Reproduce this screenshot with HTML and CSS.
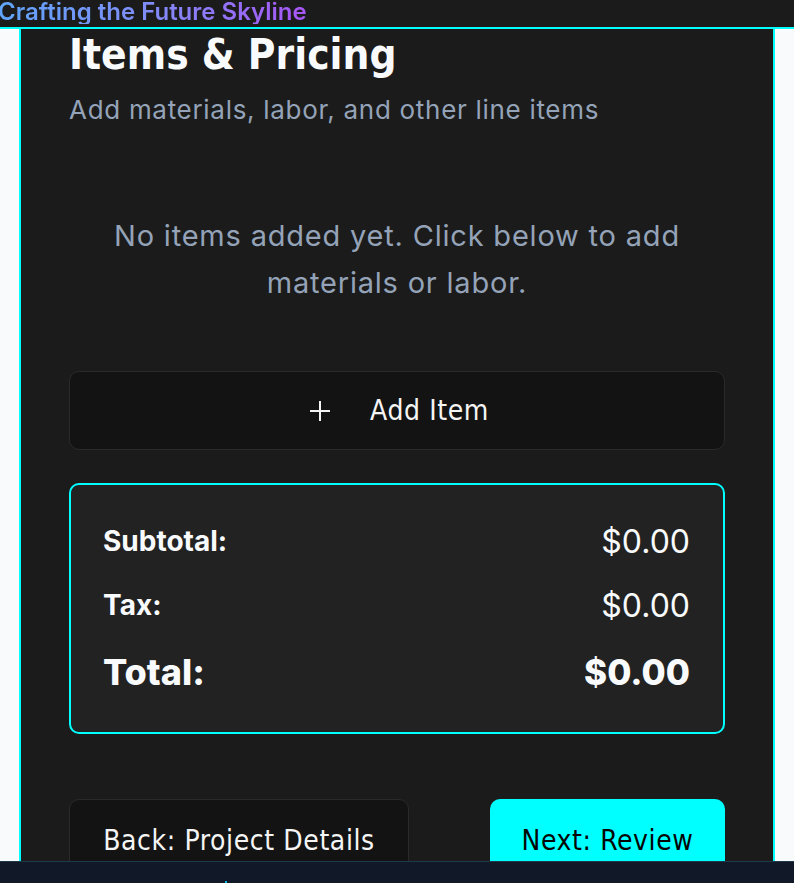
FILE: index.html
```html
<!DOCTYPE html>
<html lang="en">
<head>
<meta charset="utf-8">
<title>Items &amp; Pricing</title>
<link rel="stylesheet" href="styles.css">
</head>
<body>
<header class="topbar">
  <span class="brand">Crafting the Future Skyline</span>
</header>
<main class="card">
  <h1 class="title">Items &amp; Pricing</h1>
  <p class="subtitle">Add materials, labor, and other line items</p>
  <p class="empty">No items added yet. Click below to add materials or labor.</p>
  <button class="add-btn" type="button">
    <svg class="plus" width="22" height="22" viewBox="0 0 22 22" aria-hidden="true"><path d="M11 1v20M1 11h20" stroke="#f5f5f5" stroke-width="2" fill="none"/></svg>
    <span>Add Item</span>
  </button>
  <section class="summary">
    <div class="row"><span class="label">Subtotal:</span><span class="value">$0.00</span></div>
    <div class="row"><span class="label">Tax:</span><span class="value">$0.00</span></div>
    <div class="row total"><span class="label">Total:</span><span class="value">$0.00</span></div>
  </section>
  <div class="nav">
    <button class="nav-btn back" type="button">Back: Project Details</button>
    <button class="nav-btn next" type="button">Next: Review</button>
  </div>
</main>
<footer class="bottombar"><span class="dot"></span></footer>
</body>
</html>
```
FILE: styles.css
```css
html, body {
  margin: 0;
  padding: 0;
}
body {
  background: #f8fafc;
  font-family: Inter, "Noto Sans", sans-serif;
  height: 883px;
  overflow: hidden;
}
.topbar {
  background: #1b1b1b;
  height: 27px;
  border-bottom: 2px solid #00ffff;
  overflow: hidden;
}
.brand {
  display: inline-block;
  margin-left: -2px;
  font-size: 24px;
  line-height: 24px;
  font-weight: 600;
  background: linear-gradient(90deg, #60a5fa 0%, #818cf8 50%, #a855f7 100%);
  -webkit-background-clip: text;
  background-clip: text;
  color: transparent;
}
.card {
  margin: 0 19px;
  background: #1b1b1b;
  border-left: 2px solid #00ffff;
  border-right: 2px solid #00ffff;
  padding: 0 48px 40px;
  min-height: 900px;
}
.title {
  margin: 0;
  font-family: "DejaVu Sans", sans-serif;
  font-stretch: condensed;
  font-size: 42px;
  line-height: 52px;
  font-weight: 700;
  color: #f8fafc;
}
.subtitle {
  margin: 13px 0 0;
  font-size: 26px;
  line-height: 32px;
  letter-spacing: 0.7px;
  color: #94a3b8;
}
.empty {
  margin: 86px 0 0;
  font-size: 29px;
  line-height: 47px;
  letter-spacing: 0.8px;
  text-align: center;
  color: #94a3b8;
  padding: 0 25px;
}
.add-btn {
  margin-top: 65px;
  width: 100%;
  height: 79px;
  background: #131313;
  border: 1px solid #2a2a2a;
  border-radius: 10px;
  display: flex;
  align-items: center;
  justify-content: center;
  gap: 39px;
  color: #f5f5f5;
  font-family: "DejaVu Sans", sans-serif;
  font-stretch: condensed;
  font-size: 28px;
  letter-spacing: 0.6px;
  padding: 0 0 0 4px;
}
.plus {
  display: block;
}
.summary {
  margin-top: 33px;
  border: 2px solid #00ffff;
  border-radius: 10px;
  background: #222222;
  padding: 24px 33px 25px 32px;
}
.row {
  display: flex;
  justify-content: space-between;
  align-items: center;
  height: 64px;
  color: #f8fafc;
}
.label {
  font-size: 28px;
  font-weight: 700;
}
.value {
  font-size: 32px;
  font-weight: 400;
}
.row.total {
  height: 70px;
}
.row.total .label {
  font-size: 36px;
  font-weight: 800;
}
.row.total .value {
  font-size: 35px;
  font-weight: 800;
}
.nav {
  margin-top: 65px;
  display: flex;
  justify-content: space-between;
}
.nav-btn {
  height: 82px;
  border-radius: 10px;
  font-family: "DejaVu Sans", sans-serif;
  font-stretch: condensed;
  font-size: 28px;
  letter-spacing: 0.6px;
  padding: 0;
}
.back {
  width: 340px;
  background: #131313;
  border: 1px solid #2a2a2a;
  color: #f5f5f5;
}
.next {
  width: 235px;
  background: #00ffff;
  border: none;
  color: #050505;
}
.bottombar {
  position: fixed;
  left: 0;
  right: 0;
  bottom: 0;
  height: 21px;
  background: #111827;
  border-top: 1px solid #1e3a4a;
}
.dot {
  position: absolute;
  left: 225px;
  bottom: 0;
  width: 2px;
  height: 2px;
  background: #06b6d4;
}
```
